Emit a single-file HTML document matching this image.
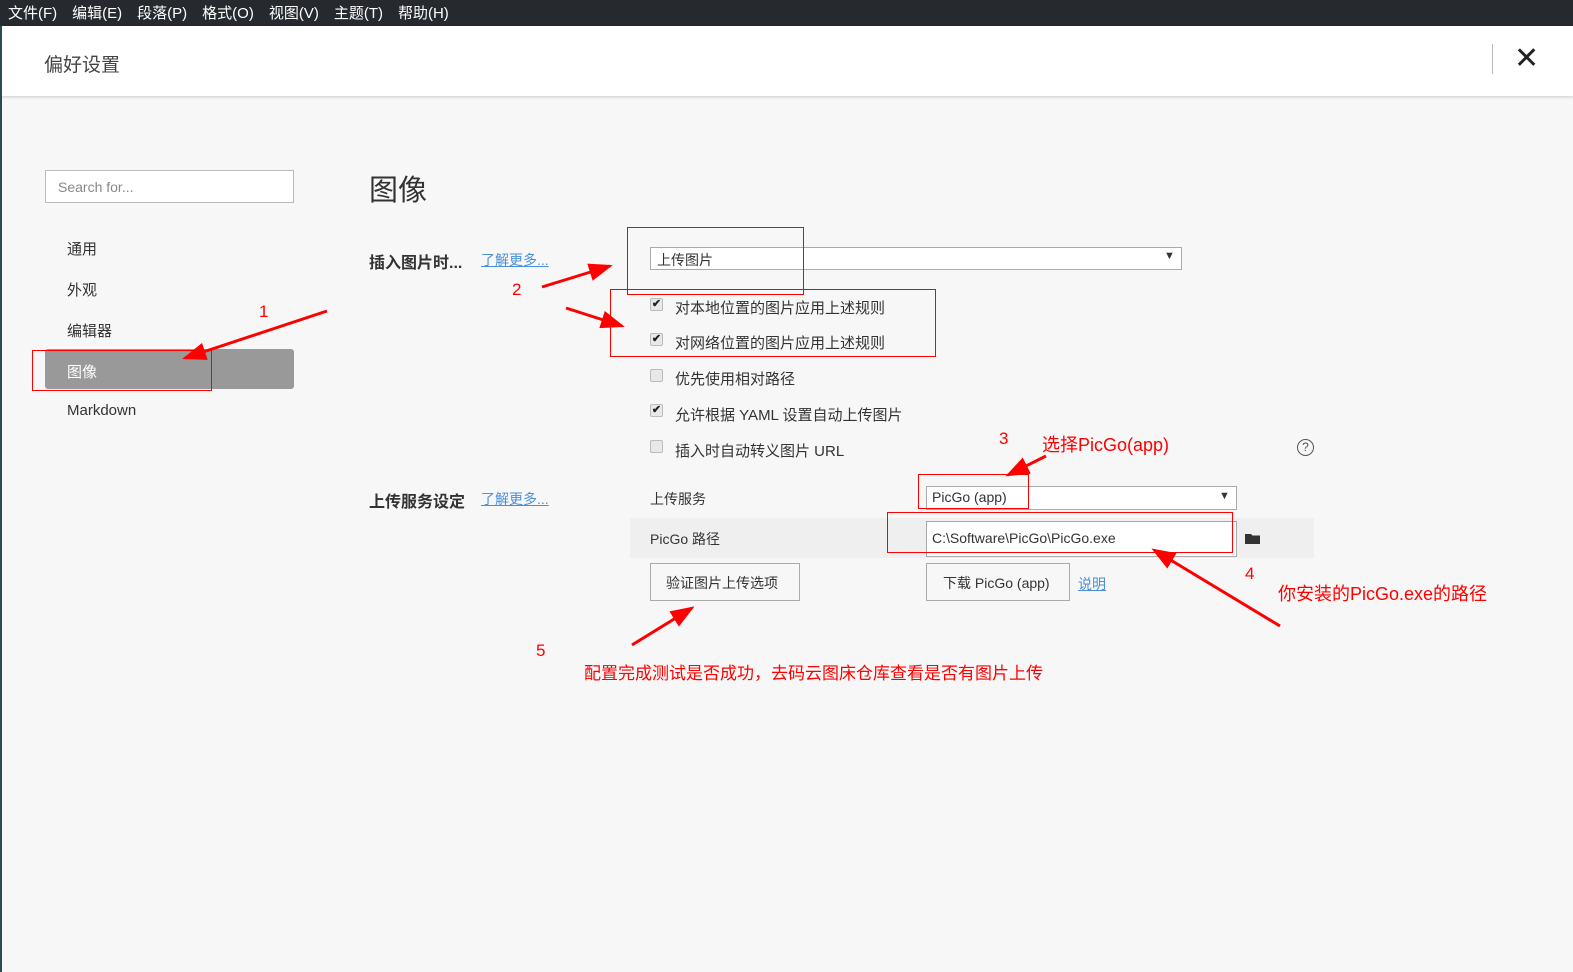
<!DOCTYPE html>
<html><head><meta charset="utf-8"><style>
*{margin:0;padding:0;box-sizing:border-box}
body{width:1573px;height:972px;background:#f7f7f7;font-family:"Liberation Sans","Noto Sans CJK SC",sans-serif;position:relative;overflow:hidden;color:#333}
.a{position:absolute;white-space:nowrap}
.menu{left:0;top:0;width:1573px;height:26px;background:#26292e;color:#fff;font-size:15px;line-height:27px}
.menu span{margin-left:8px;margin-right:7px}
.hdr{left:1px;top:26px;width:1572px;height:70px;background:#fff;box-shadow:0 1px 3px rgba(0,0,0,.18)}
.nav{font-size:15px;color:#333}
.cb{position:absolute;width:13px;height:13px;border:1px solid #bbb;border-radius:2px;background:#e8e8e8;font-size:11px;line-height:11px;text-align:center;color:#222;font-weight:bold}
.t15{font-size:15px;color:#333}
.box{border:1px solid #aaa;background:#fff}
.red{position:absolute;border:1px solid #f00}
.rt{color:#f00;position:absolute;white-space:nowrap}
</style></head><body>
<div class="a menu"><span>文件(F)</span><span>编辑(E)</span><span>段落(P)</span><span>格式(O)</span><span>视图(V)</span><span>主题(T)</span><span>帮助(H)</span></div>
<div class="a hdr"></div>
<div class="a" style="left:0;top:26px;width:2px;height:946px;background:#2b4a50"></div>
<div class="a" style="left:44px;top:50px;font-size:19px;color:#444">偏好设置</div>
<div class="a" style="left:1492px;top:44px;width:1px;height:30px;background:#bbb"></div>
<div class="a" style="left:1514px;top:42px;font-size:30px;line-height:34px;color:#222">✕</div>

<div class="a box" style="left:45px;top:170px;width:249px;height:33px;border-color:#bbb"></div>
<div class="a" style="left:58px;top:179px;font-size:14px;color:#888">Search for...</div>
<div class="a nav" style="left:67px;top:238px">通用</div>
<div class="a nav" style="left:67px;top:279px">外观</div>
<div class="a nav" style="left:67px;top:320px">编辑器</div>
<div class="a" style="left:45px;top:349px;width:249px;height:40px;background:#999;border-radius:3px"></div>
<div class="a nav" style="left:67px;top:361px;color:#fff">图像</div>
<div class="a nav" style="left:67px;top:402px">Markdown</div>

<div class="a" style="left:369px;top:167px;font-size:29px;color:#333">图像</div>
<div class="a" style="left:369px;top:249px;font-size:16px;font-weight:bold;color:#333">插入图片时...</div>
<div class="a" style="left:481px;top:250px;font-size:14px;color:#4a90d9;text-decoration:underline">了解更多...</div>
<div class="a box" style="left:650px;top:247px;width:532px;height:23px"></div>
<div class="a" style="left:657px;top:250px;font-size:14px">上传图片</div>
<div class="a" style="left:1164px;top:250px;font-size:11px">▼</div>

<div class="cb" style="left:650px;top:298px">✔</div><div class="a t15" style="left:675px;top:297px">对本地位置的图片应用上述规则</div>
<div class="cb" style="left:650px;top:333px">✔</div><div class="a t15" style="left:675px;top:332px">对网络位置的图片应用上述规则</div>
<div class="cb" style="left:650px;top:369px"></div><div class="a t15" style="left:675px;top:368px">优先使用相对路径</div>
<div class="cb" style="left:650px;top:404px">✔</div><div class="a t15" style="left:675px;top:404px">允许根据 YAML 设置自动上传图片</div>
<div class="cb" style="left:650px;top:440px"></div><div class="a t15" style="left:675px;top:440px">插入时自动转义图片 URL</div>
<div class="a" style="left:1297px;top:439px;width:17px;height:17px;border:1.5px solid #555;border-radius:50%;font-size:12px;line-height:14px;text-align:center;color:#555">?</div>

<div class="a" style="left:369px;top:488px;font-size:16px;font-weight:bold;color:#333">上传服务设定</div>
<div class="a" style="left:481px;top:489px;font-size:14px;color:#4a90d9;text-decoration:underline">了解更多...</div>
<div class="a" style="left:650px;top:489px;font-size:14px">上传服务</div>
<div class="a box" style="left:926px;top:486px;width:311px;height:24px"></div>
<div class="a" style="left:932px;top:489px;font-size:14px">PicGo (app)</div>
<div class="a" style="left:1219px;top:490px;font-size:11px">▼</div>
<div class="a" style="left:630px;top:518px;width:684px;height:40px;background:#efefef"></div>
<div class="a" style="left:650px;top:529px;font-size:14px">PicGo 路径</div>
<div class="a box" style="left:926px;top:521px;width:311px;height:36px"></div>
<div class="a" style="left:932px;top:530px;font-size:14px">C:\Software\PicGo\PicGo.exe</div>
<svg class="a" style="left:1245px;top:532px" width="16" height="13"><path d="M0,2 H6 L7.5,3.5 H15 V12 H0 Z" fill="#333"/></svg>
<div class="a box" style="left:650px;top:563px;width:150px;height:38px;background:#f7f7f7"></div>
<div class="a" style="left:666px;top:573px;font-size:14px">验证图片上传选项</div>
<div class="a box" style="left:926px;top:563px;width:144px;height:38px;background:#f7f7f7"></div>
<div class="a" style="left:943px;top:573px;font-size:14px">下载 PicGo (app)</div>
<div class="a" style="left:1078px;top:574px;font-size:14px;color:#4a90d9;text-decoration:underline">说明</div>

<div class="red" style="left:32px;top:350px;width:180px;height:41px"></div>
<div class="red" style="left:627px;top:227px;width:177px;height:68px"></div>
<div class="red" style="left:610px;top:289px;width:326px;height:68px"></div>
<div class="red" style="left:918px;top:474px;width:111px;height:35px"></div>
<div class="red" style="left:887px;top:512px;width:346px;height:41px"></div>

<div class="rt" style="left:259px;top:302px;font-size:17px">1</div>
<div class="rt" style="left:512px;top:280px;font-size:17px">2</div>
<div class="rt" style="left:999px;top:429px;font-size:17px">3</div>
<div class="rt" style="left:1042px;top:431px;font-size:18px">选择PicGo(app)</div>
<div class="rt" style="left:1245px;top:564px;font-size:17px">4</div>
<div class="rt" style="left:1278px;top:580px;font-size:18px">你安装的PicGo.exe的路径</div>
<div class="rt" style="left:536px;top:641px;font-size:17px">5</div>
<div class="rt" style="left:584px;top:659px;font-size:17px">配置完成测试是否成功，去码云图床仓库查看是否有图片上传</div>

<svg class="a" style="left:0;top:0" width="1573" height="972">
<defs><marker id="m" markerWidth="8" markerHeight="6" refX="7" refY="3" orient="auto" markerUnits="strokeWidth"><path d="M0,0 L8,3 L0,6 z" fill="#f00"/></marker></defs>
<g stroke="#f00" stroke-width="3" marker-end="url(#m)">
<line x1="327" y1="311" x2="185" y2="358"/>
<line x1="542" y1="287" x2="610" y2="266"/>
<line x1="566" y1="308" x2="622" y2="326"/>
<line x1="1046" y1="456" x2="1008" y2="475"/>
<line x1="1280" y1="626" x2="1154" y2="550"/>
<line x1="632" y1="645" x2="692" y2="608"/>
</g></svg>
</body></html>
